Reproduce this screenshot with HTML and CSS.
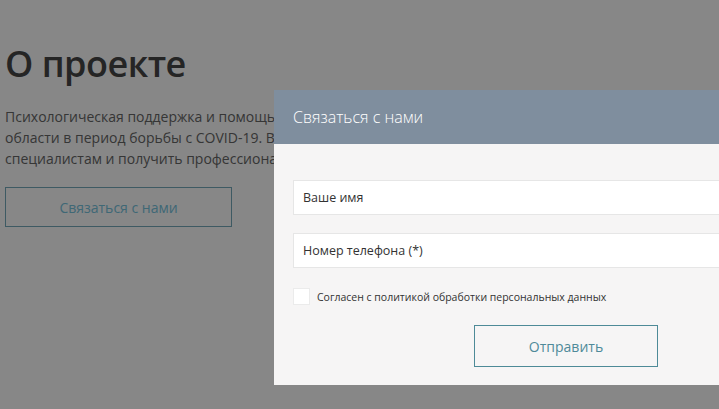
FILE: index.html
```html
<!DOCTYPE html>
<html lang="ru">
<head>
<meta charset="utf-8">
<title>О проекте</title>
<link rel="stylesheet" href="styles.css">
</head>
<body>
<main class="page">
  <h1 class="title">О проекте</h1>
  <p class="lead">Психологическая поддержка и помощь жителям<br>области в период борьбы с COVID-19. Вы можете обратиться к<br>специалистам и получить профессиональную консультацию.</p>
  <button class="btn-outline btn-page" type="button">Связаться с нами</button>
</main>

<div class="overlay"></div>

<div class="modal" role="dialog" aria-label="Связаться с нами">
  <div class="modal-head">Связаться с нами</div>
  <form class="modal-body">
    <input class="field" type="text" placeholder="Ваше имя">
    <input class="field" type="tel" placeholder="Номер телефона (*)">
    <label class="agree">
      <span class="box"></span>
      <span class="agree-text">Согласен с политикой обработки персональных данных</span>
    </label>
    <div class="actions">
      <button class="btn-outline btn-send" type="button">Отправить</button>
    </div>
  </form>
</div>
</body>
</html>
```

FILE: styles.css
```css
* { box-sizing: border-box; }

html, body {
  margin: 0;
  height: 100%;
  background: #ffffff;
  font-family: "Open Sans", "Liberation Sans", sans-serif;
  overflow: hidden;
}

.page {
  display: flex;
  flex-direction: column;
  align-items: flex-start;
  padding: 46px 0 0 5px;
}

.title {
  margin: 0;
  font-size: 36px;
  line-height: 36px;
  font-weight: 600;
  color: #464646;
  letter-spacing: -0.5px;
}

.lead {
  margin: 24px 0 0;
  font-size: 14px;
  line-height: 21px;
  color: #666666;
  white-space: nowrap;
}

.btn-outline {
  font-family: inherit;
  background: transparent;
  cursor: pointer;
}

.btn-page {
  margin-top: 18px;
  width: 227px;
  height: 40px;
  border: 1px solid #76aabb;
  color: #77c4de;
  font-size: 14px;
}

.overlay {
  position: fixed;
  inset: 0;
  background: rgba(0, 0, 0, 0.47);
}

.modal {
  position: absolute;
  left: 274px;
  top: 90px;
  width: 584px;
  background: #f6f5f5;
}

.modal-head {
  height: 54px;
  padding-left: 19px;
  display: flex;
  align-items: center;
  background: #7f8e9e;
  color: #ffffff;
  font-size: 16px;
  font-weight: 300;
}

.modal-body {
  display: flex;
  flex-direction: column;
  padding: 36px 19px 18px;
}

.field {
  height: 35px;
  margin-bottom: 18px;
  border: 1px solid #e6e6e6;
  background: #ffffff;
  padding: 0 9px;
  font-family: inherit;
  font-size: 12.5px;
  color: #333333;
  outline: none;
}

.field::placeholder { color: #333333; opacity: 1; }

.field + .field { margin-bottom: 20px; }

.agree {
  display: flex;
  align-items: center;
  gap: 7px;
  height: 17px;
}

.box {
  width: 17px;
  height: 17px;
  background: #ffffff;
  border: 1px solid #ebebeb;
}

.agree-text {
  font-size: 10.5px;
  color: #333333;
}

.actions {
  display: flex;
  justify-content: center;
  margin-top: 20px;
}

.btn-send {
  width: 184px;
  height: 42px;
  border: 1px solid #4d8a97;
  color: #4f8a99;
  font-size: 14px;
}
```
